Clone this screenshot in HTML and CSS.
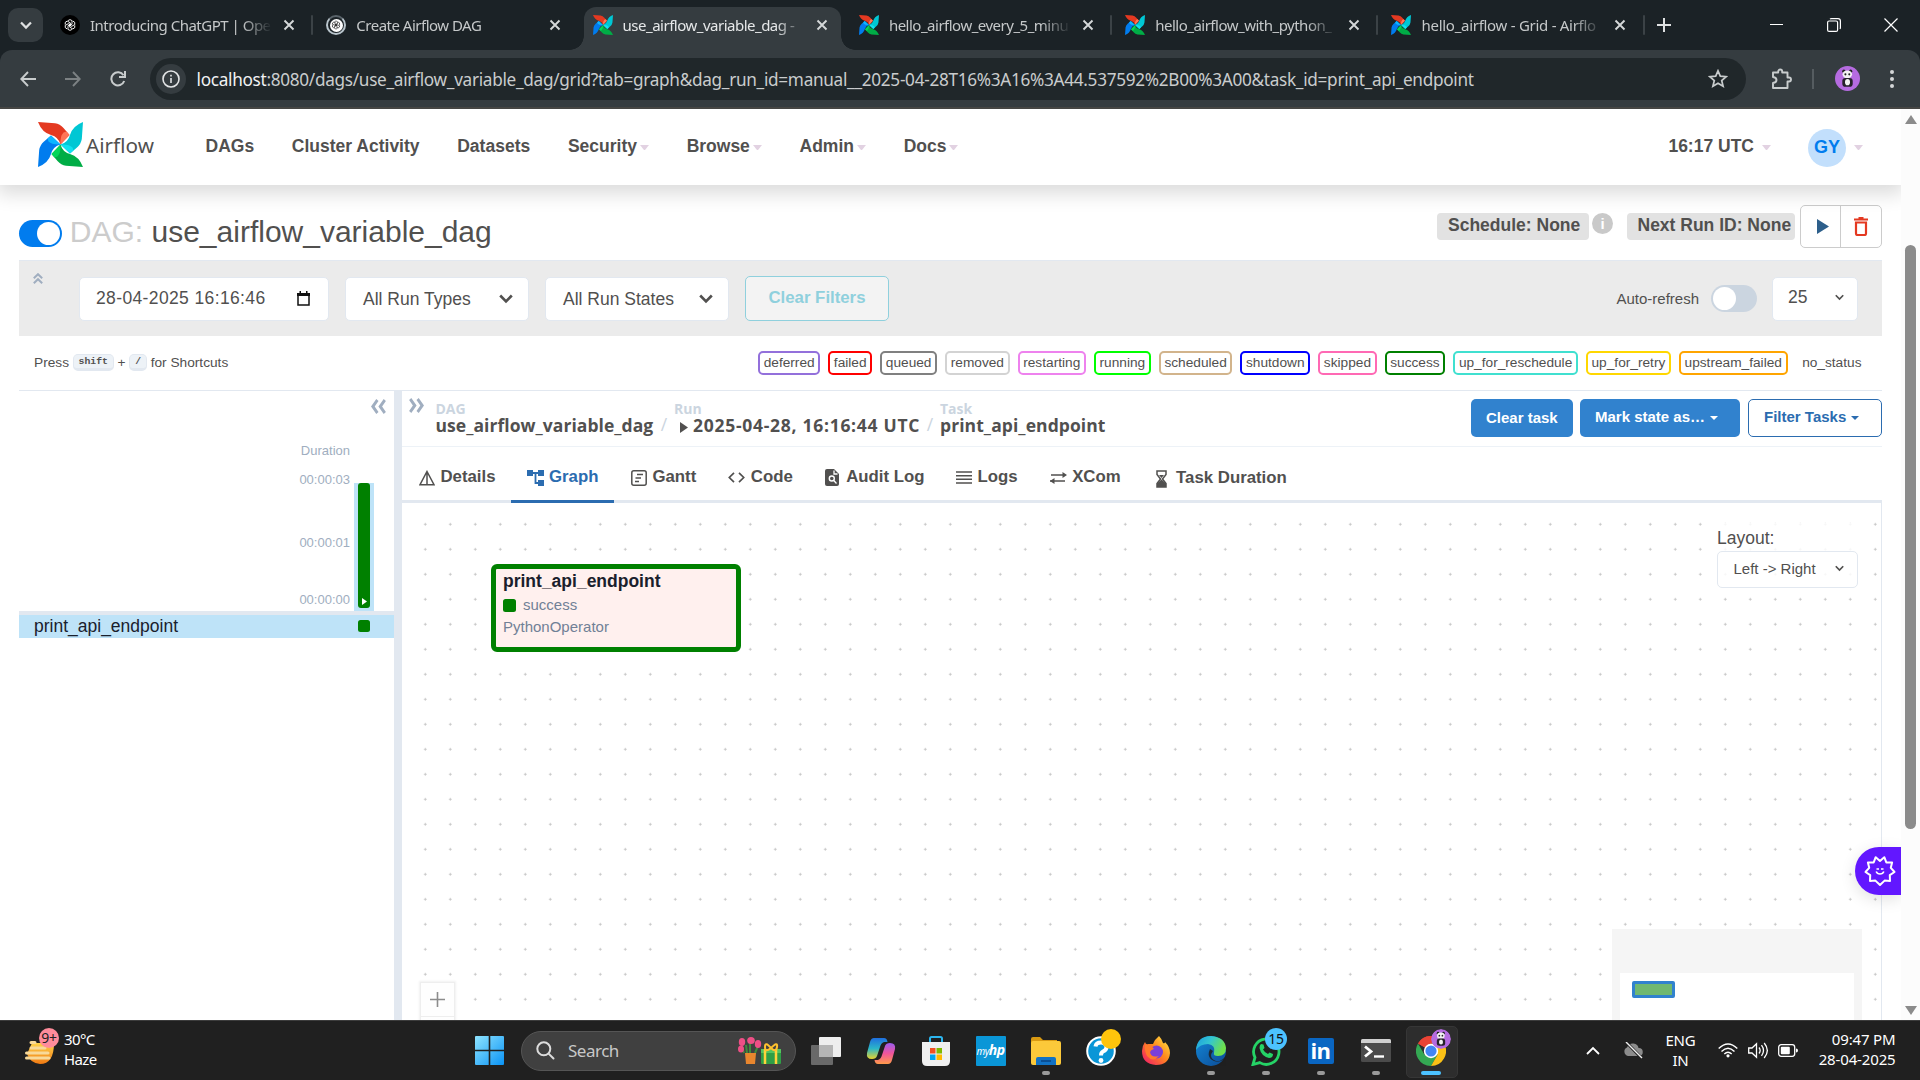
FILE: index.html
```html
<!DOCTYPE html>
<html lang="en">
<head>
<meta charset="utf-8">
<title>use_airflow_variable_dag - Grid - Airflow</title>
<link rel="stylesheet" href="styles.css">
</head>
<body>
<svg class="defs" aria-hidden="true">
  <symbol id="pinwheel" viewBox="0 0 45 45">
    <g><path fill="#e43921" d="M0 0L17 1.2Q22 2 25.500 6L31.500 13L22.500 22.500Q20.500 15 13 13Q4 10.500 0 0Z"/><path fill="#ff7557" d="M31.500 13L22.500 22.500Q22 14 25.500 10.500L28.500 9.500Z"/></g>
    <g transform="rotate(90 22.500 22.500)"><path fill="#00c7d4" d="M0 0L17 1.2Q22 2 25.500 6L31.500 13L22.500 22.500Q20.500 15 13 13Q4 10.500 0 0Z"/><path fill="#11e1ee" d="M31.500 13L22.500 22.500Q22 14 25.500 10.500L28.500 9.500Z"/></g>
    <g transform="rotate(180 22.500 22.500)"><path fill="#00ad46" d="M0 0L17 1.2Q22 2 25.500 6L31.500 13L22.500 22.500Q20.500 15 13 13Q4 10.500 0 0Z"/><path fill="#04d659" d="M31.500 13L22.500 22.500Q22 14 25.500 10.500L28.500 9.500Z"/></g>
    <g transform="rotate(270 22.500 22.500)"><path fill="#017cee" d="M0 0L17 1.2Q22 2 25.500 6L31.500 13L22.500 22.500Q20.500 15 13 13Q4 10.500 0 0Z"/><path fill="#0cb6ff" d="M31.500 13L22.500 22.500Q22 14 25.500 10.500L28.500 9.500Z"/></g>
  </symbol>
  <symbol id="knot" viewBox="0 0 20 20">
    <g fill="none" stroke="currentColor" stroke-width="1.100">
      <path id="k" d="M7.500 4.500Q10 2 12.500 4.500V9L9 11"/>
      <use href="#k" transform="rotate(60 10 10)"/><use href="#k" transform="rotate(120 10 10)"/><use href="#k" transform="rotate(180 10 10)"/><use href="#k" transform="rotate(240 10 10)"/><use href="#k" transform="rotate(300 10 10)"/>
    </g>
  </symbol>
  <symbol id="x" viewBox="0 0 12 12"><path d="M1.500 1.500l9 9M10.500 1.500l-9 9" fill="none" stroke="currentColor" stroke-width="1.900"/></symbol>
  <symbol id="chev" viewBox="0 0 14 10"><path d="M1.200 1.500L7 7.500L12.800 1.500" fill="none" stroke="currentColor" stroke-width="2.600"/></symbol>
  <symbol id="dbl" viewBox="0 0 15 15"><path fill="currentColor" d="M7.500 2L5.300 0L0 7.500L5.300 15L7.500 13L3.700 7.500ZM14.900 2L12.700 0L7.400 7.500L12.700 15L14.900 13L11.100 7.500Z"/></symbol>
  <symbol id="panda" viewBox="0 0 24 24"><circle cx="12" cy="12" r="12" fill="#b56be0"/><circle cx="8.500" cy="5" r="1.600" fill="#222"/><circle cx="15" cy="5" r="1.600" fill="#222"/><ellipse cx="11.800" cy="8" rx="4.600" ry="3.800" fill="#f2f2f2"/><circle cx="10" cy="8" r="1" fill="#222"/><circle cx="13.700" cy="8" r="1" fill="#222"/><rect x="7" y="11.500" width="10" height="8.500" rx="3" fill="#26222a"/><ellipse cx="12" cy="15.500" rx="2.400" ry="3" fill="#f2f2f2"/></symbol>
</svg>

<header class="browser">
  <div class="tabstrip">
    <button class="tab-search"><svg width="12" height="9"><use href="#chev"/></svg></button>
    <div class="tab first"><span class="fav gpt"><svg width="16" height="16"><use href="#knot"/></svg></span><span class="tt">Introducing ChatGPT | Ope</span><svg class="tx" width="12" height="12"><use href="#x"/></svg><i class="sep"></i></div>
    <div class="tab"><span class="fav ring"><svg width="12" height="12"><use href="#knot"/></svg></span><span class="tt">Create Airflow DAG</span><svg class="tx" width="12" height="12"><use href="#x"/></svg></div>
    <div class="tab active"><svg class="fav" width="20" height="20"><use href="#pinwheel"/></svg><span class="tt">use_airflow_variable_dag -</span><svg class="tx" width="12" height="12"><use href="#x"/></svg></div>
    <div class="tab"><svg class="fav" width="20" height="20"><use href="#pinwheel"/></svg><span class="tt">hello_airflow_every_5_minu</span><svg class="tx" width="12" height="12"><use href="#x"/></svg><i class="sep"></i></div>
    <div class="tab"><svg class="fav" width="20" height="20"><use href="#pinwheel"/></svg><span class="tt">hello_airflow_with_python_</span><svg class="tx" width="12" height="12"><use href="#x"/></svg><i class="sep"></i></div>
    <div class="tab"><svg class="fav" width="20" height="20"><use href="#pinwheel"/></svg><span class="tt last">hello_airflow - Grid - Airflo</span><svg class="tx" width="12" height="12"><use href="#x"/></svg><i class="sep"></i></div>
    <svg class="newtab" width="14" height="14" viewBox="0 0 14 14"><path d="M7 0V14M0 7H14" stroke="#dfe1e2" stroke-width="2"/></svg>
    <div class="winctl">
      <svg width="14" height="14" viewBox="0 0 14 14"><path d="M0 6.500H13" stroke="#fff"/></svg>
      <svg width="14" height="14" viewBox="0 0 14 14" fill="none" stroke="#fff" stroke-width="1.200"><rect x=".6" y="3" width="10" height="10.400" rx="1.500"/><path d="M3 1Q3.500.6 4.500.6H11Q13.400.6 13.400 3V9.500Q13.400 10.500 13 11"/></svg>
      <svg width="14" height="14" viewBox="0 0 14 14"><path d="M.5.5l13 13M13.500.5l-13 13" stroke="#fff" stroke-width="1.200"/></svg>
    </div>
  </div>
  <div class="toolbar">
    <svg class="back" width="16" height="16" viewBox="0 0 16 16" fill="none" stroke="#c8cccd" stroke-width="1.900"><path d="M16 8H1.500M8 1L1.300 8L8 15"/></svg>
    <svg class="fwd" width="16" height="16" viewBox="0 0 16 16" fill="none" stroke="#7c8183" stroke-width="1.900"><path d="M0 8H14.500M8 1L14.700 8L8 15"/></svg>
    <svg class="reload" width="16" height="16" viewBox="0 0 16 16" fill="none" stroke="#c8cccd" stroke-width="2"><path d="M14.200 10A6.600 6.600 0 1 1 13.500 4.200"/><path d="M15 0V6H9" /></svg>
    <div class="omnibox">
      <span class="info"><svg width="18" height="18" viewBox="0 0 18 18" fill="none" stroke="#e3e5e6" stroke-width="1.600"><circle cx="9" cy="9" r="8"/><path d="M9 8V13M9 4.800V6.600"/></svg></span>
      <span class="url"><b>localhost</b>:8080/dags/use_airflow_variable_dag/grid?tab=graph&amp;dag_run_id=manual__2025-04-28T16%3A16%3A44.537592%2B00%3A00&amp;task_id=print_api_endpoint</span>
      <svg class="star" width="20" height="19" viewBox="0 0 20 19"><path d="M10 1.800L12.300 7.200L18.200 7.700L13.700 11.500L15.100 17.200L10 14.200L4.900 17.200L6.300 11.500L1.800 7.700L7.700 7.200Z" fill="none" stroke="#c8cccd" stroke-width="1.700"/></svg>
    </div>
    <svg class="ext" width="22" height="22" viewBox="0 0 22 22"><path d="M2 4.500H7.200V3.500A2 2 0 0 1 11.200 3.500V4.500H16.500V9.500H18A2 2 0 0 1 18 13.500H16.500V20H2V15Q5.500 14.500 5.500 12T2 9Z" fill="none" stroke="#c8cccd" stroke-width="1.900" stroke-linejoin="round"/></svg>
    <i class="tsep"></i>
    <svg class="avatar" width="25" height="25"><use href="#panda"/></svg>
    <svg class="kebab" width="4" height="18" viewBox="0 0 4 18" fill="#d4d6d7"><circle cx="2" cy="2" r="2"/><circle cx="2" cy="9" r="2"/><circle cx="2" cy="16" r="2"/></svg>
  </div>
</header>

<div class="viewport">
  <div class="page">
    <nav class="navbar">
      <svg width="45" height="45"><use href="#pinwheel"/></svg>
      <span class="brand">Airflow</span>
      <ul class="menu">
        <li>DAGs</li><li>Cluster Activity</li><li>Datasets</li><li>Security<i class="caret"></i></li><li>Browse<i class="caret"></i></li><li>Admin<i class="caret"></i></li><li>Docs<i class="caret"></i></li>
      </ul>
      <div class="clock">16:17 UTC<i class="caret"></i></div>
      <div class="user">GY</div><i class="caret"></i>
    </nav>

    <div class="dag-head">
      <span class="switch on"></span>
      <h1><span>DAG:</span> use_airflow_variable_dag</h1>
      <span class="pill sched">Schedule: None</span>
      <span class="inf">i</span>
      <span class="pill next">Next Run ID: None</span>
      <div class="btns">
        <span><svg width="12" height="15" viewBox="0 0 12 15"><path d="M0 0L12 7.500L0 15Z" fill="#2d5f8b"/></svg></span>
        <span><svg width="14" height="19" viewBox="0 0 14 19"><path d="M0 2.500H14M4.500 1H9.500" stroke="#e43921" stroke-width="2"/><path d="M2 5.500H12V16.500Q12 18 10.500 18H3.500Q2 18 2 16.500Z" fill="none" stroke="#e43921" stroke-width="2.200"/></svg></span>
      </div>
    </div>

    <div class="filters">
      <svg class="fold" width="10" height="11" viewBox="0 0 10 11"><path d="M.8 5.200L5 1.200L9.200 5.200M.8 10.200L5 6.200L9.200 10.200" fill="none" stroke="#a0aec0" stroke-width="2"/></svg>
      <div class="field date"><span>28-04-2025 16:16:46</span><svg width="13" height="15" viewBox="0 0 13 15"><path d="M1 3H12V14H1Z" fill="none" stroke="#111" stroke-width="1.500"/><path d="M0 2H13V5H0ZM2.500 0H4V2H2.500ZM9 0H10.500V2H9Z" fill="#111"/></svg></div>
      <div class="field sel"><span>All Run Types</span><svg width="14" height="10"><use href="#chev"/></svg></div>
      <div class="field sel"><span>All Run States</span><svg width="14" height="10"><use href="#chev"/></svg></div>
      <div class="clear">Clear Filters</div>
      <span class="auto">Auto-refresh</span>
      <span class="switch off"></span>
      <div class="field num"><span>25</span><svg width="9" height="7"><use href="#chev"/></svg></div>
    </div>

    <div class="legend">
      <div class="keys">Press <kbd>shift</kbd> + <kbd>/</kbd> for Shortcuts</div>
      <span class="st deferred">deferred</span><span class="st failed">failed</span><span class="st queued">queued</span><span class="st removed">removed</span><span class="st restarting">restarting</span><span class="st running">running</span><span class="st scheduled">scheduled</span><span class="st shutdown">shutdown</span><span class="st skipped">skipped</span><span class="st success">success</span><span class="st resched">up_for_reschedule</span><span class="st retry">up_for_retry</span><span class="st upstream">upstream_failed</span><span class="st none">no_status</span>
    </div>

    <div class="split">
      <section class="grid-pane">
        <div class="grid-top">
          <div class="axis"><span>Duration</span><span>00:00:03</span><span>00:00:01</span><span>00:00:00</span></div>
          <div class="runcol"><div class="bar"><svg width="5" height="7" viewBox="0 0 5 7"><path d="M0 0L5 3.500L0 7Z" fill="#fff"/></svg></div></div>
          <svg class="collapse" width="15" height="15"><use href="#dbl"/></svg>
        </div>
        <div class="grid-row"><span>print_api_endpoint</span><i></i></div>
      </section>
      <div class="divider"></div>
      <section class="detail">
        <div class="crumbs">
          <svg class="expand" width="15" height="15"><use href="#dbl"/></svg>
          <div class="crumb c1"><small>DAG</small><strong>use_airflow_variable_dag</strong></div><em>/</em>
          <div class="crumb c2"><small>Run</small><strong><svg width="8" height="11" viewBox="0 0 8 11"><path d="M0 0L8 5.500L0 11Z" fill="#51504f"/></svg>2025-04-28, 16:16:44 UTC</strong></div><em>/</em>
          <div class="crumb c3"><small>Task</small><strong>print_api_endpoint</strong></div>
          <div class="actions">
            <span class="btn solid low">Clear task</span>
            <span class="btn solid mark">Mark state as…<i class="tri"></i></span>
            <span class="btn line">Filter Tasks<i class="tri"></i></span>
          </div>
        </div>
        <div class="tabs">
          <span class="t first"><svg width="16" height="16" viewBox="0 0 16 16" fill="none" stroke="currentColor" stroke-width="1.500"><path d="M8 1.500L15 14.700H1ZM8 2V15"/></svg>Details</span>
          <span class="t sel"><svg width="17" height="16" viewBox="0 0 17 16" fill="currentColor"><path d="M0 0H6V6H0ZM11 0H17V6H11ZM11 10H17V16H11Z"/><path d="M6 3H11M8.500 3V13H11" stroke="currentColor" stroke-width="1.800" fill="none"/></svg>Graph</span>
          <span class="t gantt"><svg width="16" height="16" viewBox="0 0 16 16" fill="none" stroke="currentColor" stroke-width="1.500"><rect x=".8" y=".8" width="14.400" height="14.400" rx="2"/><path d="M6 4.500H12M4.500 8H10M4 11.500H8"/></svg>Gantt</span>
          <span class="t"><svg width="17" height="11" viewBox="0 0 17 11" fill="none" stroke="currentColor" stroke-width="1.700"><path d="M6 .8L1.300 5.500L6 10.200M11 .8L15.700 5.500L11 10.200"/></svg>Code</span>
          <span class="t audit"><svg width="14" height="17" viewBox="0 0 14 17"><path d="M2 0H9L14 5V15Q14 17 12 17H2Q0 17 0 15V2Q0 0 2 0Z" fill="currentColor"/><circle cx="6.800" cy="9.500" r="2.500" fill="none" stroke="#fff" stroke-width="1.400"/><path d="M8.500 11.300L11.500 14.500M9 1.500V5H12.500" stroke="#fff" stroke-width="1.300" fill="none"/></svg>Audit Log</span>
          <span class="t"><svg width="16" height="13" viewBox="0 0 16 13"><path d="M0 1H16M0 4.700H16M0 8.300H16M0 12H16" stroke="currentColor" stroke-width="1.600"/></svg>Logs</span>
          <span class="t"><svg width="17" height="12" viewBox="0 0 17 12" fill="none" stroke="currentColor" stroke-width="1.600"><path d="M1 3H15M0 9H15"/><path d="M12.500 0L17 3L12.500 6ZM4.500 6L0 9L4.500 12Z" fill="currentColor" stroke="none"/></svg>XCom</span>
          <span class="t dur"><svg width="11" height="18" viewBox="0 0 11 18"><path d="M1 1H10V4.500L6.500 9L10 13.500V17H1V13.500L4.500 9L1 4.500Z" fill="none" stroke="currentColor" stroke-width="1.500"/><path d="M1 17V13.500L5.500 9.500L10 13.500V17ZM3 5H8L5.500 8Z" fill="currentColor"/></svg>Task Duration</span>
        </div>
        <div class="canvas">
          <div class="node"><strong>print_api_endpoint</strong><span class="state"><i></i>success</span><span>PythonOperator</span></div>
          <div class="layout"><label>Layout:</label><div class="lsel"><span>Left -&gt; Right</span><svg width="9" height="7"><use href="#chev"/></svg></div></div>
          <div class="zoomin"><svg width="15" height="15" viewBox="0 0 15 15"><path d="M7.500 0V15M0 7.500H15" stroke="#8c8c8c" stroke-width="1.600"/></svg></div>
          <div class="minimap"><div><i></i></div></div>
        </div>
      </section>
    </div>
    <div class="assistant"><svg width="32" height="32" viewBox="-16 -16 32 32" fill="none" stroke="#fff" stroke-width="2" stroke-linejoin="round"><path d="M0 -10L4.300 -13.800L6.300 -8.600L12.100 -8.600L10.800 -3.200L14.500 1L9.800 4.200L10 10L4.600 9.600L0 14L-4.600 9.600L-10 10L-9.800 4.200L-14.500 1L-10.800 -3.200L-12.100 -8.600L-6.300 -8.600L-4.300 -13.800Z"/><path d="M-3.800 .5Q-3 3 0 3T3.800 .5" stroke-width="1.600"/><path d="M-3.500 -2H-1M1 -2H3.500" stroke-width="1.400"/></svg></div>
  </div>
  <div class="scroll"><i class="up"></i><i class="thumb"></i><i class="down"></i></div>
</div>

<footer class="taskbar">
  <div class="weather">
    <svg width="30" height="34" viewBox="0 0 30 34"><defs><linearGradient id="wg" x1="0" y1="0" x2="0" y2="1"><stop offset="0" stop-color="#ffd24a"/><stop offset="1" stop-color="#f07a13"/></linearGradient></defs><path d="M7 12H29Q29 33 15 33Q5 32 2 23Z" fill="url(#wg)"/><path d="M6 11.500H10M6 17H20M1.500 22H23M1.500 27H24" stroke="#f8d999" stroke-width="3" stroke-linecap="round"/></svg>
    <b class="wbadge">9+</b>
    <div>30°C<br>Haze</div>
  </div>
  <svg class="win" width="29" height="29" viewBox="0 0 29 29"><defs><linearGradient id="wing" x1="0" y1="0" x2="1" y2="1"><stop offset="0" stop-color="#8fe4ff"/><stop offset="1" stop-color="#0a93f5"/></linearGradient></defs><path d="M0 1Q0 0 1 0H13.700V13.700H0ZM15.300 0H28Q29 0 29 1V13.700H15.300ZM0 15.300H13.700V29H1Q0 29 0 28ZM15.300 15.300H29V28Q29 29 28 29H15.300Z" fill="url(#wing)"/></svg>
  <div class="search">
    <svg width="19" height="19" viewBox="0 0 19 19" fill="none" stroke="#dcdcdc" stroke-width="2"><circle cx="7.800" cy="7.800" r="6.500"/><path d="M12.600 12.600L17.500 17.500" stroke-linecap="round"/></svg>
    <span>Search</span>
    <svg class="gift" width="43" height="28" viewBox="0 0 43 28"><path d="M6 16L4 10M12 16V5M17 16L20 9M9 16L8 8" stroke="#3f8a3b" stroke-width="2"/><g fill="#ee4f86"><ellipse cx="4" cy="5" rx="3.200" ry="4"/><ellipse cx="13" cy="3.500" rx="3.800" ry="3.500"/><ellipse cx="20" cy="7" rx="3.200" ry="4"/><ellipse cx="3" cy="12" rx="3" ry="3.500"/></g><path d="M7 16H18L17 27H8Z" fill="#e8862e"/><rect x="23" y="12" width="20" height="15" rx="1" fill="#2f9e46"/><path d="M23 12H43V16H23Z" fill="#54c45e"/><path d="M27 12V27M38 12V27" stroke="#ffd23c" stroke-width="2.500"/><path d="M33 11Q27 4 27 10T33 11Q40 4 39 10T33 11" fill="none" stroke="#ffc22e" stroke-width="2"/></svg>
  </div>
  <div class="apps">
    <div class="app"><svg width="30" height="28" viewBox="0 0 30 28"><rect x="8" width="22" height="20" rx="1" fill="#eee"/><rect y="8" width="22" height="20" rx="1" fill="#777" fill-opacity=".85"/><rect x="8" y="8" width="14" height="12" fill="#b5b5b5"/></svg></div>
    <div class="app"><svg width="30" height="28" viewBox="0 0 30 28"><defs><linearGradient id="c1" x1="0" y1="0" x2="0" y2="1"><stop offset="0" stop-color="#1f6fe0"/><stop offset=".5" stop-color="#2bb6c8"/><stop offset="1" stop-color="#e8d22c"/></linearGradient><linearGradient id="c2" x1="0" y1="0" x2="0" y2="1"><stop offset="0" stop-color="#9a5cf0"/><stop offset=".5" stop-color="#f0559a"/><stop offset="1" stop-color="#ff9a4a"/></linearGradient></defs><path d="M8 1H18Q21 1 21.500 5L18 5Q15 6 14 10L11 19Q10 22 6 22Q0 22 1 16L4 5Q5 1 8 1Z" fill="url(#c1)"/><path d="M22 27H12Q9 27 8.500 23L12 23Q15 22 16 18L19 9Q20 6 24 6Q30 6 29 12L26 23Q25 27 22 27Z" fill="url(#c2)"/></svg></div>
    <div class="app"><svg width="30" height="30" viewBox="0 0 30 30"><path d="M9 7V2.500Q9 1 10.500 1H19.500Q21 1 21 2.500V7" fill="none" stroke="#2cb5ee" stroke-width="2"/><path d="M1 6H29V25Q29 30 24 30H6Q1 30 1 25Z" fill="#f0f0f0"/><path d="M9 12H14.500V17.500H9Z" fill="#f25022"/><path d="M15.500 12H21V17.500H15.500Z" fill="#7fba00"/><path d="M9 18.500H14.500V24H9Z" fill="#00a4ef"/><path d="M15.500 18.500H21V24H15.500Z" fill="#ffb900"/></svg></div>
    <div class="app"><span class="hp">my<b>hp</b></span></div>
    <div class="app run"><svg width="30" height="28" viewBox="0 0 30 28"><path d="M0 2Q0 0 2 0H9L12 3H26V10H0Z" fill="#d99a12"/><rect y="4" width="30" height="24" rx="2" fill="#fcc93a"/><path d="M5 28V22Q5 20 7 20H23Q25 20 25 22V28Z" fill="#1272c4"/><path d="M10 24H20" stroke="#0a4f94" stroke-width="2"/></svg></div>
    <div class="app"><svg width="30" height="30" viewBox="0 0 30 30"><circle cx="15" cy="15" r="13.800" fill="#0a96d7" stroke="#fff" stroke-width="2"/><path d="M9.500 10.500Q10 6.500 15 6.500T20.500 11Q20.500 14 17 15.500Q15 16.500 15 19.500" fill="none" stroke="#fff" stroke-width="4"/><circle cx="15" cy="24.500" r="2.400" fill="#fff"/></svg><b class="bdg yellow"></b></div>
    <div class="app"><svg width="30" height="30" viewBox="0 0 30 30"><defs><linearGradient id="ff" x1="1" y1="0" x2="0" y2="1"><stop offset="0" stop-color="#fff04a"/><stop offset=".45" stop-color="#ff8a1c"/><stop offset="1" stop-color="#f01070"/></linearGradient></defs><path d="M18 0Q21 3 22 7Q24 8 24 6Q29 11 29 17Q28 29 15 29Q1 28 1 15Q1 10 4 6Q5 9 7 8Q9 8 12 8Q14 3 18 0Z" fill="url(#ff)"/><circle cx="15.500" cy="16" r="6.500" fill="#7a3fd8"/><path d="M4 9Q9 8 13 13Q9 14 9 17Q11 22 18 20Q12 27 6 20Q3 14 4 9Z" fill="#ff7a2a"/></svg></div>
    <div class="app run"><svg width="30" height="30" viewBox="0 0 30 30"><defs><linearGradient id="ed" x1="0" y1="0" x2="1" y2=".4"><stop offset="0" stop-color="#1b9de2"/><stop offset=".5" stop-color="#34c6cf"/><stop offset="1" stop-color="#6fe04a"/></linearGradient><linearGradient id="ed2" x1="0" y1="0" x2="1" y2="1"><stop offset="0" stop-color="#1488d8"/><stop offset="1" stop-color="#0b4a94"/></linearGradient></defs><circle cx="15" cy="15" r="15" fill="url(#ed2)"/><path d="M0 14Q1 0 15 0Q29 1 30 12Q30 20 22 20Q17 20 18 17Q20 9 12 8Q4 8 0 14Z" fill="url(#ed)"/><path d="M17 15Q12 22 20 25Q25 26 29 21Q32 21 30 30H20Q27 26 28 23Q24 27 18 25Q10 22 14 13Z" fill="#202020" fill-opacity=".85"/></svg></div>
    <div class="app run"><svg width="30" height="30" viewBox="0 0 30 30"><path d="M2 28.500L4 21.500A12.700 12.700 0 1 1 8.800 26.600Z" fill="none" stroke="#25d366" stroke-width="2.800"/><path d="M10 8L12.500 8.500L13.500 12L12 13.500Q13.500 16.500 17 18L18.500 16.500L22 18Q22 22 18 22Q10 20 8.500 12Q8.500 9 10 8Z" fill="#25d366"/></svg><b class="bdg blue">15</b></div>
    <div class="app run"><span class="li">in</span></div>
    <div class="app run"><svg width="30" height="23" viewBox="0 0 30 23"><rect width="30" height="23" rx="1.500" fill="#4b4b4b"/><path d="M0 1.500Q0 0 1.500 0H28.500Q30 0 30 1.500V4H0Z" fill="#d0d0d0"/><path d="M4 7.500L10 12.500L4 17.500" fill="none" stroke="#fff" stroke-width="2.800"/><path d="M13 17.500H23" stroke="#fff" stroke-width="2.400"/></svg></div>
    <div class="app cur"><svg width="30" height="30" viewBox="0 0 30 30"><path d="M15 15L2 7.500A15 15 0 0 1 28 7.500H15Z" fill="#ea4335"/><path d="M15 15V0A15 15 0 0 0 2 7.500Z" fill="#ea4335"/><path d="M2 7.500A15 15 0 0 0 15 30L21.500 18.700L15 15L8.500 18.700Z" fill="#34a853"/><path d="M28 7.500A15 15 0 0 1 15 30L21.500 18.700L15 7.500Z" fill="#fbc116"/><circle cx="15" cy="15" r="7.200" fill="#fff"/><circle cx="15" cy="15" r="5.600" fill="#4285f4"/></svg><svg class="bdg pbd" width="20" height="20"><use href="#panda"/></svg></div>
  </div>
  <div class="tray">
    <svg class="tup" width="14" height="9" viewBox="0 0 14 9"><path d="M1 8L7 2L13 8" fill="none" stroke="#fff" stroke-width="1.800"/></svg>
    <svg class="cloud" width="20" height="17" viewBox="0 0 20 17"><path d="M5 14A4.500 4.500 0 0 1 4 5.500Q6 1 10.500 1.500Q15 2 15.500 6A4 4 0 0 1 16 14Z" fill="#8c8c8c"/><path d="M3 0L19 16.500" stroke="#202020" stroke-width="3"/><path d="M3 0L19 16" stroke="#eee" stroke-width="1.400"/></svg>
    <div class="lang">ENG<br>IN</div>
    <svg class="wifi" width="20" height="15" viewBox="0 0 20 15" fill="none" stroke="#fff" stroke-width="1.400"><path d="M.7 5.500Q10 -3.500 19.300 5.500M3.500 8.500Q10 2 16.500 8.500M6.300 11Q10 7.500 13.700 11"/><circle cx="10" cy="12.800" r="1.600" fill="#fff" stroke="none"/></svg>
    <svg class="vol" width="21" height="17" viewBox="0 0 21 17" fill="none" stroke="#fff" stroke-width="1.300"><path d="M.7 6H4L8.500 1.800V15.200L4 11H.7ZM11 5.500Q13.300 8.500 11 11.500M13.500 3.200Q17.500 8.500 13.500 13.800M16.200 1Q22.500 8.500 16.200 16"/></svg>
    <svg class="bat" width="20" height="13" viewBox="0 0 20 13"><rect x=".7" y=".7" width="16" height="11.600" rx="2.500" fill="none" stroke="#fff" stroke-width="1.300"/><rect x="2.800" y="2.800" width="9" height="7.400" rx="1" fill="#fff"/><path d="M18 4.500Q20 4.500 20 6.500T18 8.500Z" fill="#fff"/></svg>
    <div class="time">09:47 PM<br>28-04-2025</div>
  </div>
</footer>
</body>
</html>
```
FILE: styles.css
```css
* { box-sizing: border-box; }
body { margin: 0; width: 1920px; height: 1080px; overflow: hidden; display: flex; flex-direction: column; font-family: "Liberation Sans", Arial, sans-serif; font-size: 17.5px; color: #51504f; background: #fff; }
svg { flex: none; display: block; }
.defs { position: absolute; width: 0; height: 0; }

/* browser chrome */
.browser { height: 109px; flex: none; background: #1b2226; font-family: "Noto Sans", sans-serif; }
.tabstrip { height: 50px; display: flex; align-items: center; }
.tab-search { width: 35px; height: 34px; margin-left: 8px; border: 0; padding: 0; border-radius: 10px; background: #353c40; color: #dfe1e2; display: flex; align-items: center; justify-content: center; }
.tab { width: 266.3px; height: 43px; margin-top: 7px; padding: 0 0 7px 9px; display: flex; align-items: center; position: relative; color: #c5c8c9; font-size: 15px; flex: none; }
.tab.first { margin-left: 8px; }
.tab .fav { width: 20px; height: 20px; flex: none; }
.tt { width: 182px; flex: none; margin-left: 10px; white-space: nowrap; letter-spacing: -0.5px; line-height: 22px; -webkit-mask-image: linear-gradient(90deg, #000 152px, transparent 182px); mask-image: linear-gradient(90deg, #000 152px, transparent 182px); }
.tt.last { letter-spacing: -0.28px; }
.tx { margin-left: 11px; color: #d5d8d9; }
.sep { position: absolute; right: 4px; top: 8px; width: 2px; height: 20px; background: #3b4246; border-radius: 1px; }
.tab.active { background: #353c40; border-radius: 12px 12px 0 0; color: #e6e8e9; width: 257px; margin-right: 9.300px; padding-left: 9px; }
.tab.active::before, .tab.active::after { content: ""; position: absolute; bottom: 0; width: 14px; height: 14px; }
.tab.active::before { left: -14px; background: radial-gradient(circle at 0 0, transparent 13.500px, #353c40 14px); }
.tab.active::after { right: -14px; background: radial-gradient(circle at 100% 0, transparent 13.500px, #353c40 14px); }
.gpt { background: #000; border-radius: 50%; color: #fff; display: flex; align-items: center; justify-content: center; }
.ring { border-radius: 50%; border: 2px solid #b9c5cc; border-top-color: #59636a; background: #fff; background-clip: content-box; color: #222; padding: 1.500px; display: flex; align-items: center; justify-content: center; }
.newtab { margin-left: 8px; }
.winctl { display: flex; gap: 43px; margin-left: auto; padding-right: 22px; }
.toolbar { height: 59px; background: #353c40; border-radius: 12px 12px 0 0; border-bottom: 2px solid #464644; display: flex; align-items: center; }
.back { margin-left: 20px; }
.fwd { margin-left: 29px; }
.reload { margin-left: 28.500px; }
.omnibox { width: 1596px; height: 42px; margin-left: 24.500px; border-radius: 21px; background: #20272a; display: flex; align-items: center; padding: 0 18px 0 6px; }
.info { width: 30px; height: 30px; border-radius: 50%; background: #353c40; display: flex; align-items: center; justify-content: center; }
.url { margin: 1px 0 0 10.500px; font-size: 17.2px; letter-spacing: -0.3px; color: #c9cccd; white-space: nowrap; }
.url b { font-weight: 400; color: #f1f2f3; }
.star { margin-left: auto; }
.ext { margin-left: 25px; }
.tsep { width: 2px; height: 20px; background: #555c60; margin-left: 19px; }
.avatar { margin-left: 21px; }
.kebab { margin-left: 30px; }

/* page */
.viewport { display: flex; height: 911px; flex: none; }
.page { width: 1901px; position: relative; display: flex; flex-direction: column; overflow: hidden; }
.scroll { width: 19px; background: #fcfcfc; position: relative; display: flex; flex-direction: column; align-items: center; padding: 6px 0 5px; }
.up { border: 6px solid transparent; border-top: 0; border-bottom: 9px solid #8b8b8b; }
.thumb { width: 11px; height: 584px; margin-top: 121px; border-radius: 6px; background: #8b8b8b; }
.down { border: 6px solid transparent; border-bottom: 0; border-top: 9px solid #8b8b8b; margin-top: auto; }
.navbar { height: 76px; flex: none; padding: 0 0 2px 38px; background: #fff; display: flex; align-items: center; font-weight: 700; box-shadow: 0 6px 18px 3px rgba(0,0,0,.14); position: relative; }
.navbar svg { margin-top: -3px; }
.brand { font: 400 20.700px "Noto Sans", sans-serif; margin: -3px 0 0 3px; width: 120px; }
.menu { display: flex; gap: 37.700px; list-style: none; margin: 0 0 0 -.5px; padding: 0; }
.menu li { display: flex; align-items: center; }
.caret { border: 4.500px solid transparent; border-top: 5px solid #e2d2e2; border-bottom: 0; margin: 3px 0 0 3px; width: 9px; }
.clock { display: flex; align-items: center; margin-left: auto; margin-right: 37px; }
.clock .caret { margin-left: 8px; }
.user { width: 38px; height: 38px; border-radius: 50%; background: #c2dffc; color: #017cee; display: flex; align-items: center; justify-content: center; margin-top: 3px; font-size: 18px; }
.navbar > .caret { margin: 3px 38px 0 8px; }

.dag-head { height: 75px; flex: none; padding: 0 19px; display: flex; align-items: flex-start; }
.switch { width: 43px; height: 27px; border-radius: 14px; display: flex; padding: 2px; flex: none; }
.switch::before { content: ""; width: 23px; height: 23px; border-radius: 50%; background: #fff; }
.switch.on { background: #017cee; margin-top: 35px; justify-content: flex-end; }
.switch.off { width: 46px; background: #cbd5e0; margin-left: 12px; }
h1 { margin: 30px 0 0 7.800px; font-size: 30px; line-height: 34px; font-weight: 400; }
h1 span { color: #ccc; }
.pill { height: 27px; line-height: 25px; margin-top: 28px; border-radius: 4px; background: #e2e2e2; font-weight: 700; padding-left: 11px; white-space: nowrap; }
.sched { width: 152px; margin-left: auto; }
.inf { width: 21px; height: 21px; border-radius: 50%; background: #c9c9c9; color: #fff; font-weight: 700; font-size: 15px; text-align: center; line-height: 21px; margin: 28px 14px 0 3px; }
.next { width: 168px; padding-left: 10.500px; }
.btns { width: 82px; height: 43px; margin: 20px 0 0 5px; border: 1px solid #ccc; border-radius: 5px; display: flex; }
.btns span { flex: 1; display: flex; align-items: center; justify-content: center; }
.btns span:first-child { flex: 0 0 40px; border-right: 1px solid #ccc; padding-left: 5px; }

.filters { height: 76px; flex: none; margin: 0 19px; background: #ebebeb; border-top: 1px solid #e2e8f0; display: flex; align-items: center; }
.fold { margin: -40px 0 0 14px; }
.field { height: 44px; background: #fff; border: 1px solid #e2e8f0; border-radius: 5px; display: flex; align-items: center; }
.field svg { margin-left: auto; }
.date { width: 250px; margin-left: 36px; padding: 0 18px 1px 16px; letter-spacing: .37px; }
.sel.field { width: 184px; margin-left: 16px; padding: 1px 15px 0 17px; }
.clear { width: 144px; height: 45px; margin-left: 16px; border: 1px solid #8fd0dd; border-radius: 5px; background: #f3f3f3; color: #8fd0dd; font-weight: 700; font-size: 16.800px; text-align: center; line-height: 42px; }
.auto { font-size: 15px; margin-left: auto; }
.num { width: 86px; margin: 0 24px 0 15px; padding: 0 13px 2px 15px; }

.legend { height: 54px; flex: none; padding: 0 40px 0 34px; display: flex; align-items: center; gap: 7.950px; font-size: 13.700px; }
.keys { margin: -2px auto 0 0; display: flex; gap: 3.600px; align-items: center; white-space: nowrap; }
kbd { font: 700 9.800px/13px "Liberation Mono", monospace; padding: 0 5px; background: #edf2f7; border: 1px solid #e2e8f0; border-bottom-width: 3px; border-radius: 5px; }
.st { height: 24px; border: 2.500px solid; border-radius: 5px; padding: 0 3.650px; line-height: 19px; color: #51504f; white-space: nowrap; }
.deferred { border-color: mediumpurple; } .failed { border-color: red; } .queued { border-color: gray; } .removed { border-color: lightgrey; }
.restarting { border-color: violet; } .running { border-color: lime; } .scheduled { border-color: tan; } .shutdown { border-color: blue; }
.skipped { border-color: hotpink; } .success { border-color: green; } .resched { border-color: turquoise; } .retry { border-color: gold; }
.upstream { border-color: orange; } .none { border-color: transparent; margin-left: 1px; padding-right: 0; margin-right: -2.500px; }

.split { display: flex; margin: 0 19px; height: 630px; flex: none; border-top: 1px solid #e2e8f0; }
.grid-pane { width: 375px; flex: none; }
.grid-top { height: 224px; border-bottom: 4px solid #e2e8f0; display: flex; position: relative; }
.axis { width: 331px; padding-top: 50px; display: flex; flex-direction: column; text-align: right; font-size: 13px; line-height: 20px; color: #a0aec0; }
.axis span:nth-child(2) { margin-top: 9px; } .axis span:nth-child(3) { margin-top: 43px; } .axis span:nth-child(4) { margin-top: 37px; }
.runcol { width: 20px; margin: 92px 0 0 4px; background: #bee3f8; padding: 0 4px; height: 128px; }
.bar { height: 125px; background: green; border-radius: 3px; display: flex; align-items: flex-end; padding: 0 0 3px 4px; }
.collapse { color: #a0aec0; margin: 8px 0 0 -3px; }
.expand { color: #a0aec0; transform: scaleX(-1); margin: 7px 0 0 7px; }
.grid-row { height: 23px; background: #bee3f8; color: #1a202c; display: flex; align-items: center; padding-left: 15px; }
.grid-row span { width: 324px; }
.grid-row i { width: 12px; height: 12px; border-radius: 2.500px; background: green; margin-top: -1px; }
.divider { width: 8px; background: #e2e8f0; flex: none; }
.detail { flex: 1; display: flex; flex-direction: column; }
.crumbs { height: 56px; flex: none; border-bottom: 1px solid #edf2f7; display: flex; align-items: flex-start; font-family: "Open Sans", "Noto Sans", sans-serif; }
.crumb { padding-top: 10px; display: flex; flex-direction: column; white-space: nowrap; }
.crumb small { font-size: 14px; line-height: 16px; font-weight: 700; color: #cbd5e0; }
.crumb strong { font-size: 17.500px; line-height: 20px; margin-top: -2px; font-weight: 700; display: flex; align-items: center; }
.crumb strong svg { margin: 4px 5px 0 6px; }
.c1 { margin-left: 11.500px; width: 218.500px; }
.c1 strong { letter-spacing: .05px; }
.c2 { width: 246px; }
.c2 strong { letter-spacing: .72px; }
.c3 strong { letter-spacing: .08px; }
.crumbs em { font-style: normal; color: #cbd5e0; width: 20px; text-align: center; padding-top: 20px; line-height: 26px; }
.actions { margin: 8px 0 0 auto; display: flex; font: 700 15px "Liberation Sans", sans-serif; }
.btn { height: 38px; border-radius: 5px; display: flex; align-items: center; padding: 0 15px 3px; }
.solid { background: #3182ce; color: #fff; }
.low { padding-bottom: 1px; width: 102px; }
.mark { margin: 0 8px 0 7px; width: 160px; }
.line { border: 1px solid #2b6cb0; color: #2b6cb0; width: 134px; padding-bottom: 4px; }
.tri { border: 4.500px solid transparent; border-top: 4.500px solid; border-bottom: 0; margin: 3px 0 0 5px; }
.tabs { height: 56px; flex: none; border-bottom: 3px solid #e2e8f0; display: flex; font-weight: 700; font-size: 16.800px; }
.t { height: 56px; display: flex; align-items: center; gap: 5.500px; padding: 4px 16px 0; white-space: nowrap; }
.t svg { margin-top: 1px; }
.t.first { padding: 4px 15px 0 17px; }
.t.gantt { padding-left: 16.500px; }
.t.sel { color: #2b6cb0; border-bottom: 3px solid #2b6cb0; padding-top: 7px; }
.t.audit { gap: 7px; padding-left: 16.500px; padding-right: 15.500px; }
.t.dur { gap: 9.500px; padding: 6px 16px 0 19px; }
.canvas { flex: 1; position: relative; overflow: hidden; margin-left: 1px; border-right: 1px solid #e2e8f0; background-image: radial-gradient(circle, #c4c4c4 .9px, transparent 1.400px); background-size: 25px 25px; background-position: 9.800px 8.800px; }
.node { position: absolute; left: 88px; top: 61px; width: 250px; height: 88px; border: 5px solid green; border-radius: 6px; background: #fff0ee; padding: 1px 0 0 7px; display: flex; flex-direction: column; font-size: 15px; color: #718096; line-height: 22px; }
.node strong { font-size: 17.500px; line-height: 22px; color: #1a202c; }
.state { display: flex; align-items: center; gap: 7px; margin-top: 2px; }
.state i { width: 13px; height: 13px; border-radius: 2.500px; background: green; }
.layout { position: absolute; left: 1314px; top: 20px; width: 141px; background: rgba(255,255,255,.85); padding-top: 3px; }
.layout label { display: block; line-height: 25px; height: 25px; }
.lsel { height: 37px; border: 1px solid #e2e8f0; border-radius: 5px; display: flex; align-items: center; justify-content: space-between; padding: 0 13px 2px 15.500px; font-size: 15px; }
.zoomin { position: absolute; left: 17px; top: 479px; width: 35px; height: 70px; background: linear-gradient(#eee,#eee) 0 33px/100% 1px no-repeat #fefefe; border: 1px solid #eee; box-shadow: 0 0 2px 1px rgba(0,0,0,.06); padding: 9px; }
.minimap { position: absolute; left: 1209px; top: 426px; width: 250px; height: 188px; background: #f5f5f5; padding: 44px 8px; }
.minimap div { height: 100px; background: #fff; padding: 8px 12px; }
.minimap i { display: block; width: 43px; height: 17px; background: #70b870; border: 3px solid #3182ce; border-radius: 2px; }
.assistant { position: absolute; right: 0; top: 738px; width: 46px; height: 48px; background: #6217ff; border-radius: 24px 0 0 24px; box-shadow: 0 4px 16px rgba(0,0,0,.12); display: flex; align-items: center; padding-left: 9px; }

/* taskbar */
.taskbar { height: 60px; flex: none; background: #202020; border-top: 1px solid #3c3c3c; display: flex; align-items: center; color: #fff; font: 15px/20px "Noto Sans", sans-serif; letter-spacing: -.25px; position: relative; }
.weather { position: relative; display: flex; width: 475px; padding-left: 25px; }
.weather > svg { margin-top: -1px; }
.weather div { margin: -3px 0 0 9px; letter-spacing: -.6px; }
.wbadge { position: absolute; left: 39px; top: -4px; width: 20px; height: 20px; border-radius: 50%; background: #ff8c9b; color: #222; text-align: center; font-weight: 400; font-size: 14px; }
.search { width: 275px; height: 40px; margin-left: 17px; border-radius: 20px; background: #404040; border: 1px solid #555; display: flex; align-items: center; padding: 0 14px; font-size: 17px; letter-spacing: -.5px; color: #c8c8c8; }
.search span { margin-left: 13px; }
.gift { margin-left: auto; }
.apps { display: flex; margin-left: 2px; }
.app { width: 55px; height: 60px; display: flex; align-items: center; justify-content: center; position: relative; }
.app.run::after, .app.cur::after { content: ""; position: absolute; bottom: 6px; left: 23.500px; width: 8px; height: 4px; border-radius: 2px; background: #9a9a9a; }
.app.cur::before { content: ""; position: absolute; left: 2.500px; top: 5px; width: 50px; height: 50px; border-radius: 5px; background: #2d2d2d; border: 1px solid #363636; }
.app.cur::after { width: 20px; left: 17.500px; background: #4cc2ff; }
.app.cur svg { position: relative; }
.hp { width: 30px; height: 30px; background: #0a96d7; color: #fff; font-size: 10px; font-style: italic; line-height: 28px; text-align: center; letter-spacing: -.6px; border-radius: 1px; }
.hp b { font-size: 14px; }
.li { width: 26px; height: 26px; background: #0a66c2; border-radius: 2px; font: 700 22px/25px "Open Sans", sans-serif; text-align: center; letter-spacing: -.5px; }
.bdg { position: absolute; border-radius: 50%; }
.yellow { width: 20px; height: 20px; left: 28px; top: 8px; background: #ffc40c; }
.blue { width: 22px; height: 22px; left: 27px; top: 7px; background: #4cc2ff; color: #111; font-weight: 400; font-size: 14px; line-height: 21px; text-align: center; }
.app.cur .pbd { position: absolute; left: 28px; top: 8px; }
.tray { display: flex; align-items: center; margin-left: auto; padding-right: 24.500px; height: 60px; }
.cloud { margin-left: 23px; }
.lang { width: 40px; text-align: center; margin: -2px 0 0 18px; }
.wifi { margin-left: 17px; }
.vol { margin-left: 10px; }
.bat { margin-left: 9px; }
.time { width: 98px; text-align: right; margin-top: -4px; letter-spacing: -.15px; }
```
